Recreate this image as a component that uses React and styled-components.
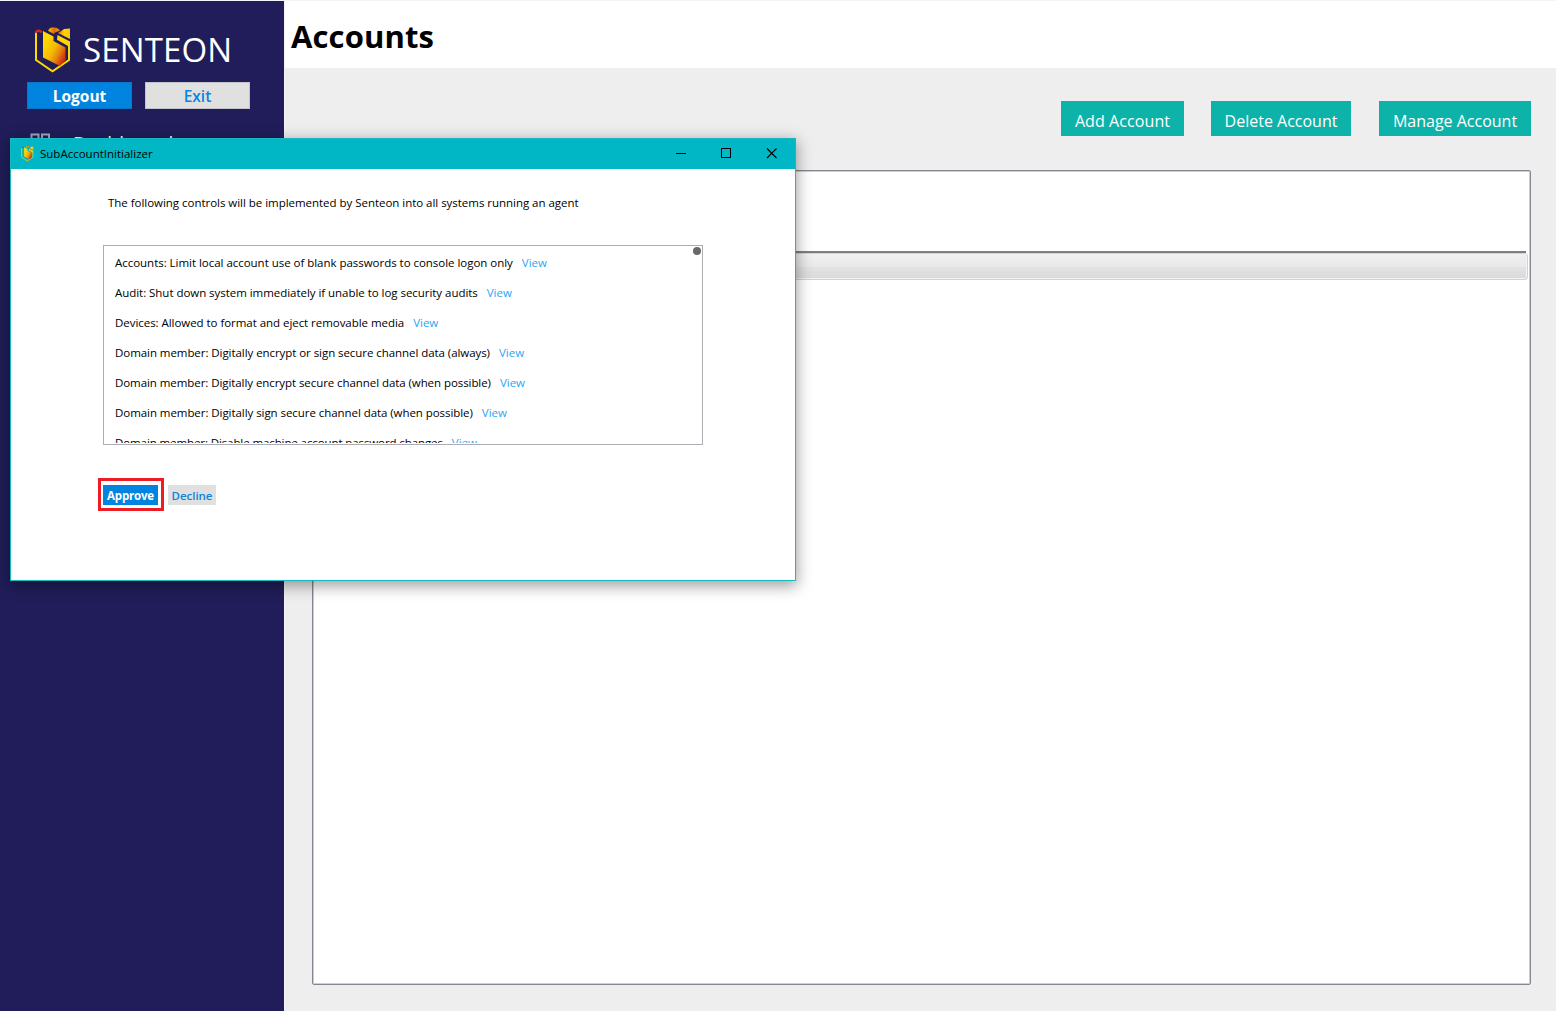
import React from 'react';
import styled, { createGlobalStyle } from 'styled-components';

const Global = createGlobalStyle`
  * { box-sizing: border-box; }
  html, body, #root { height: 100%; }
  body { margin: 0; overflow: hidden; font-family: "Open Sans", "Noto Sans", sans-serif; background: #fff; }
  button { font-family: inherit; padding: 0; margin: 0; border: 0; cursor: pointer; white-space: nowrap; }
  h1, p { margin: 0; }
`;

const Shell = styled.div`
  position: relative;
  display: flex;
  height: 1011px;
  width: 1556px;
  padding-top: 1px;
  background: #f4f4f8;
`;

const Sidebar = styled.aside`
  width: 284px;
  flex: none;
  background: #211d5a;
  padding: 25px 34px 0 27px;
`;

const Brand = styled.div`
  display: flex;
  align-items: center;
  height: 48px;
  padding-left: 8px;
  gap: 12px;
`;

const BrandName = styled.span`
  color: #fff;
  font-size: 33px;
  line-height: 48px;
  letter-spacing: ${p => p.$track}px;
`;

const SessionButtons = styled.div`
  display: flex;
  gap: 13px;
  margin-top: 8px;
`;

const SessionButton = styled.button`
  width: 105px;
  height: 27px;
  padding-top: 1px;
  font-size: 15.5px;
  font-weight: ${p => (p.$primary ? 700 : 600)};
  line-height: 25px;
  color: ${p => (p.$primary ? '#fff' : '#0a84de')};
  background: ${p => (p.$primary ? '#0084e0' : '#e0e0e0')};
  border: 1px solid ${p => (p.$primary ? '#0a74cb' : '#c3c3cb')};
`;

const NavItem = styled.div`
  display: flex;
  align-items: flex-start;
  gap: 22px;
  margin-top: 20px;
  padding-left: 3px;
  color: #fff;
  font-size: 19px;
  line-height: 28px;
  letter-spacing: 0.3px;
`;

const NavIcon = styled.svg`
  margin-top: 4px;
`;

const Main = styled.main`
  flex: 1;
  display: flex;
  flex-direction: column;
  min-width: 0;
  margin-left: 1px;
  background: #eee;
`;

const PageHeader = styled.header`
  height: 67px;
  background: #fff;
  padding: 13px 0 0 6px;
`;

const PageTitle = styled.h1`
  font-size: 31px;
  line-height: 44px;
  font-weight: 700;
  letter-spacing: ${p => p.$track}px;
  color: #000;
`;

const Actions = styled.div`
  display: flex;
  justify-content: flex-end;
  padding: 33px 25px 0 0;
`;

const ActionButton = styled.button`
  width: ${p => p.$width}px;
  height: 35px;
  margin-left: ${p => p.$gap}px;
  background: #0db2a9;
  color: #fff;
  font-size: 16px;
  line-height: 29px;
  padding-top: 6px;
  letter-spacing: ${p => p.$track}px;
`;

const ListPanel = styled.section`
  margin: 34px 25px 26px 27px;
  flex: 1;
  background: #fff;
  border: 1px solid #828790;
  border-radius: 2px;
  box-shadow: inset 0 0 0 1px #ccced3;
  padding: 80px 2px 0 2px;
`;

const HeaderRule = styled.div`
  height: 2px;
  margin-right: 2px;
  background: #7f7f7f;
`;

const SelectedRow = styled.div`
  height: 27px;
  border: 1px solid #d2d2d2;
  border-radius: 3px;
  box-shadow: inset 0 0 0 1px #f3f3f3;
  background: linear-gradient(#f0f0f0 0, #e9e9e9 50%, #e3e3e3 51%, #dadada 100%);
`;

const Dialog = styled.div`
  position: absolute;
  left: 10px;
  top: 138px;
  width: 786px;
  height: 443px;
  border: 1px solid #18b7c2;
  background: #fff;
  box-shadow: 0 4px 14px 1px rgba(0, 0, 0, 0.38);
`;

const TitleBar = styled.div`
  display: flex;
  align-items: center;
  height: 30px;
  background: #02b7c5;
  padding-left: 10px;
`;

const WindowTitle = styled.span`
  flex: 1;
  padding-left: 6px;
  font-size: 11.5px;
  line-height: 30px;
  letter-spacing: ${p => p.$track}px;
`;

const WindowControls = styled.div`
  display: flex;
  align-self: flex-start;
`;

const WindowControl = styled.button`
  width: ${p => p.$width}px;
  height: 28px;
  background: transparent;
  display: grid;
  place-items: center;
`;

const DialogBody = styled.div`
  padding: 24px 92px 0;
`;

const Intro = styled.p`
  padding-left: 5px;
  font-size: 11.5px;
  line-height: 20px;
  letter-spacing: ${p => p.$track}px;
  color: #000;
`;

const ControlList = styled.div`
  display: flex;
  justify-content: space-between;
  width: 600px;
  height: 200px;
  margin-top: 32px;
  border: 1px solid #abadb3;
  overflow: hidden;
`;

const ControlRows = styled.div`
  padding: 2px 0 0 11px;
  height: 197px;
  overflow: hidden;
`;

const ControlRow = styled.div`
  display: flex;
  align-items: center;
  height: 30px;
  gap: 9px;
  font-size: 11.5px;
  line-height: 16px;
  white-space: nowrap;
`;

const ControlName = styled.span`
  letter-spacing: ${p => p.$track}px;
  color: #000;
`;

const ViewLink = styled.a`
  color: #2aa5f7;
`;

const ScrollThumb = styled.div`
  width: 8px;
  height: 8px;
  margin: 1px 1px 0 0;
  border-radius: 50%;
  background: #696969;
`;

const DialogButtons = styled.div`
  display: flex;
  align-items: center;
  gap: 4px;
  margin: 33px 0 0 -5px;
`;

const Highlight = styled.div`
  width: 66px;
  height: 33px;
  border: 3px solid #ed1c24;
  padding: 4px 2px;
`;

const DialogButton = styled.button`
  display: block;
  width: ${p => p.$width}px;
  height: 20px;
  margin-top: ${p => (p.$primary ? 0 : 1)}px;
  padding-top: 2px;
  font-size: 11.5px;
  line-height: 18px;
  font-weight: ${p => (p.$primary ? 700 : 600)};
  letter-spacing: ${p => p.$track}px;
  color: ${p => (p.$primary ? '#fff' : '#0a84de')};
  background: ${p => (p.$primary ? '#0084e0' : '#e0e0e0')};
`;

function Logo({ width, height, id }) {
  return (
    <svg width={width} height={height} viewBox="0 0 36 47">
      <defs>
        <linearGradient id={id + 'body'} x1="0" y1="0.1" x2="1" y2="0.9">
          <stop offset="0.15" stopColor="#ffdc00" />
          <stop offset="0.5" stopColor="#f6b804" />
          <stop offset="0.7" stopColor="#e58210" />
          <stop offset="0.9" stopColor="#cf3410" />
        </linearGradient>
        <linearGradient id={id + 'head'} x1="0" y1="0" x2="1" y2="0">
          <stop offset="0" stopColor="#ffc800" />
          <stop offset="0.5" stopColor="#dc6a12" />
          <stop offset="1" stopColor="#f5a400" />
        </linearGradient>
        <linearGradient id={id + 'tip'} x1="0" y1="0" x2="1" y2="0">
          <stop offset="0" stopColor="#e0700f" />
          <stop offset="0.5" stopColor="#ffd500" />
          <stop offset="1" stopColor="#ffc400" />
        </linearGradient>
      </defs>
      <path d="M1 5V33L17.500 44.300L34 33V17" fill="none" stroke="#ffd800" strokeWidth="2" />
      <path d="M1 6Q1.500 3.500 4 3.700L7 5.200" fill="none" stroke="#c62c16" strokeWidth="2.600" />
      <path d="M8 4L18.500 9.500V14L30.500 20.500V33L25 39L8 30.500Z" fill={`url(#${id}body)`} />
      <path d="M13 3.800L15 1L18 0.300L22 1L25 3.500L20 5.500L18.800 7Z" fill={`url(#${id}head)`} />
      <path d="M23.500 5.500L25.500 4.600L29 2L35 1.500V12L23.500 6.300Z" fill={`url(#${id}tip)`} />
      <path d="M22.500 8L35 14.500V19H33L22 12.800Z" fill="#ffd500" />
    </svg>
  );
}

const CONTROLS = [
  ['Accounts: Limit local account use of blank passwords to console logon only', -0.03],
  ['Audit: Shut down system immediately if unable to log security audits', -0.04],
  ['Devices: Allowed to format and eject removable media', -0.045],
  ['Domain member: Digitally encrypt or sign secure channel data (always)', -0.06],
  ['Domain member: Digitally encrypt secure channel data (when possible)', -0.07],
  ['Domain member: Digitally sign secure channel data (when possible)', -0.06],
  ['Domain member: Disable machine account password changes', -0.1],
];

const ACTIONS = [
  ['Add Account', 123, 0, 0.08],
  ['Delete Account', 140, 27, 0],
  ['Manage Account', 152, 28, 0],
];

export default function App() {
  return (
    <>
      <Global />
      <Shell>
        <Sidebar>
          <Brand>
            <Logo id="brand" width={36} height={47} />
            <BrandName $track={0.15}>SENTEON</BrandName>
          </Brand>
          <SessionButtons>
            <SessionButton $primary>Logout</SessionButton>
            <SessionButton>Exit</SessionButton>
          </SessionButtons>
          <NavItem>
            <NavIcon width="21" height="21" viewBox="0 0 21 21" fill="none" stroke="#a6a4bd" strokeWidth="2">
              <rect x="1.500" y="1.500" width="7" height="7" />
              <rect x="12" y="1.500" width="7" height="7" />
              <rect x="1.500" y="12" width="7" height="7" />
              <rect x="12" y="12" width="7" height="7" />
            </NavIcon>
            <span>Dashboard</span>
          </NavItem>
        </Sidebar>
        <Main>
          <PageHeader>
            <PageTitle $track={0.12}>Accounts</PageTitle>
          </PageHeader>
          <Actions>
            {ACTIONS.map(([label, width, gap, track]) => (
              <ActionButton key={label} $width={width} $gap={gap} $track={track}>{label}</ActionButton>
            ))}
          </Actions>
          <ListPanel>
            <HeaderRule />
            <SelectedRow />
          </ListPanel>
        </Main>
        <Dialog>
          <TitleBar>
            <Logo id="window" width={13} height={16} />
            <WindowTitle $track={0}>SubAccountInitializer</WindowTitle>
            <WindowControls>
              <WindowControl $width={46} aria-label="Minimize">
                <svg width="10" height="10"><path d="M0 5.500H10" stroke="#000" /></svg>
              </WindowControl>
              <WindowControl $width={44} aria-label="Maximize">
                <svg width="10" height="10"><rect x="0.500" y="0.500" width="9" height="9" fill="none" stroke="#000" /></svg>
              </WindowControl>
              <WindowControl $width={47} aria-label="Close">
                <svg width="11" height="11"><path d="M1 0.500L10.500 10M10.500 0.500L1 10" stroke="#000" strokeWidth="1.100" /></svg>
              </WindowControl>
            </WindowControls>
          </TitleBar>
          <DialogBody>
            <Intro $track={-0.03}>The following controls will be implemented by Senteon into all systems running an agent</Intro>
            <ControlList>
              <ControlRows>
                {CONTROLS.map(([name, track]) => (
                  <ControlRow key={name}>
                    <ControlName $track={track}>{name}</ControlName>
                    <ViewLink>View</ViewLink>
                  </ControlRow>
                ))}
              </ControlRows>
              <ScrollThumb />
            </ControlList>
            <DialogButtons>
              <Highlight>
                <DialogButton $primary $width={55} $track={-0.2}>Approve</DialogButton>
              </Highlight>
              <DialogButton $width={48} $track={-0.05}>Decline</DialogButton>
            </DialogButtons>
          </DialogBody>
        </Dialog>
      </Shell>
    </>
  );
}
